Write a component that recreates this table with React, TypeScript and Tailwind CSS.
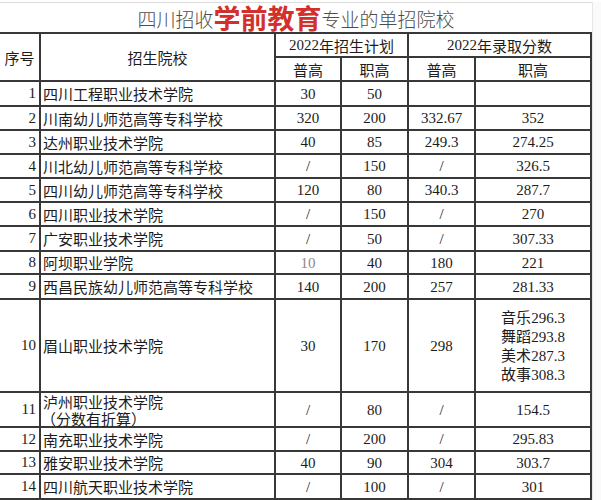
const cjk = "font-['Noto_Sans_CJK_SC',sans-serif]";
const num = "font-['Liberation_Serif','Noto_Sans_CJK_SC',serif]";

type Row = { n: number; name: string[]; a: string; b: string; c: string; d: string[] };

const rows: Row[] = [
  { n: 1, name: ['四川工程职业技术学院'], a: '30', b: '50', c: '', d: [] },
  { n: 2, name: ['川南幼儿师范高等专科学校'], a: '320', b: '200', c: '332.67', d: ['352'] },
  { n: 3, name: ['达州职业技术学院'], a: '40', b: '85', c: '249.3', d: ['274.25'] },
  { n: 4, name: ['川北幼儿师范高等专科学校'], a: '/', b: '150', c: '/', d: ['326.5'] },
  { n: 5, name: ['四川幼儿师范高等专科学校'], a: '120', b: '80', c: '340.3', d: ['287.7'] },
  { n: 6, name: ['四川职业技术学院'], a: '/', b: '150', c: '/', d: ['270'] },
  { n: 7, name: ['广安职业技术学院'], a: '/', b: '50', c: '/', d: ['307.33'] },
  { n: 8, name: ['阿坝职业学院'], a: '10', b: '40', c: '180', d: ['221'] },
  { n: 9, name: ['西昌民族幼儿师范高等专科学校'], a: '140', b: '200', c: '257', d: ['281.33'] },
  {
    n: 10,
    name: ['眉山职业技术学院'],
    a: '30',
    b: '170',
    c: '298',
    d: ['音乐296.3', '舞蹈293.8', '美术287.3', '故事308.3'],
  },
  { n: 11, name: ['泸州职业技术学院', '（分数有折算）'], a: '/', b: '80', c: '/', d: ['154.5'] },
  { n: 12, name: ['南充职业技术学院'], a: '/', b: '200', c: '/', d: ['295.83'] },
  { n: 13, name: ['雅安职业技术学院'], a: '40', b: '90', c: '304', d: ['303.7'] },
  { n: 14, name: ['四川航天职业技术学院'], a: '/', b: '100', c: '/', d: ['301'] },
];

const cell = 'flex items-center border-r-2 border-b-2 border-[#383838] text-[15px] leading-none text-[#1c1c1c]';

function NumText({ v }: { v: string }) {
  // chinese prefix (音乐 etc.) in CJK font, digits in serif
  const m = v.match(/^([^\d/]*)(.*)$/);
  const pre = m ? m[1] : '';
  const rest = m ? m[2] : v;
  return (
    <span className="whitespace-nowrap">
      {pre && <span className={cjk}>{pre}</span>}
      <span className={num}>{rest}</span>
    </span>
  );
}

export default function App() {
  return (
    <div className="min-h-[500px] w-[601px] overflow-hidden bg-white pt-[2px]">
      <div className="flex">
        <div className="grid w-[592px] grid-cols-[41px_235px_66px_67px_67px_116px] grid-rows-[32px_24px_24px_25px_24px_24px_24px_24px_24px_25px_23px_25px_93px_35px_24px_23px_25px]">
          {/* Title */}
          <div className="col-span-6 flex items-end justify-center border-t border-b-2 border-t-[#dcdcdc] border-b-[#383838]">
            <span className={`${cjk} mb-[3px] text-[19px] leading-[20px] font-light text-[#4d4d4d]`}>四川招收</span>
            <span className={`${cjk} text-[27px] leading-[28px] font-bold text-[#d3302c]`}>学前教育</span>
            <span className={`${cjk} mb-[3px] text-[19px] leading-[20px] font-light text-[#4d4d4d]`}>专业的单招院校</span>
          </div>

          {/* Header */}
          <div className={`${cell} ${cjk} row-span-2 justify-center`}>序号</div>
          <div className={`${cell} ${cjk} row-span-2 justify-center`}>招生院校</div>
          <div className={`${cell} col-span-2 justify-center`}>
            <span className={num}>2022</span>
            <span className={cjk}>年招生计划</span>
          </div>
          <div className={`${cell} col-span-2 justify-center`}>
            <span className={num}>2022</span>
            <span className={cjk}>年录取分数</span>
          </div>
          <div className={`${cell} ${cjk} justify-center`}>普高</div>
          <div className={`${cell} ${cjk} justify-center`}>职高</div>
          <div className={`${cell} ${cjk} justify-center`}>普高</div>
          <div className={`${cell} ${cjk} justify-center`}>职高</div>

          {/* Body */}
          {rows.map((r) => (
            <div key={r.n} className="contents">
              <div className={`${cell} ${num} justify-end pr-[3px]`}>{r.n}</div>
              <div className={`${cell} ${cjk} justify-start pl-[2px]`}>
                <div className="flex flex-col leading-[17px]">
                  {r.name.map((t) => (
                    <span key={t} className={t.startsWith('（') ? '-ml-[2px]' : ''}>
                      {t}
                    </span>
                  ))}
                </div>
              </div>
              <div className={`${cell} justify-center ${r.n === 8 ? 'text-[#8a8a8a]' : ''}`}>
                <NumText v={r.a} />
              </div>
              <div className={`${cell} justify-center`}>
                <NumText v={r.b} />
              </div>
              <div className={`${cell} justify-center`}>
                <NumText v={r.c} />
              </div>
              <div className={`${cell} justify-center`}>
                <div className="flex flex-col leading-[17px]">
                  {r.d.map((t) => (
                    <NumText key={t} v={t} />
                  ))}
                </div>
              </div>
            </div>
          ))}
        </div>
        <div className="flex-1 border-l border-[#e6e6e6] bg-[#fafafa]" />
      </div>
    </div>
  );
}
